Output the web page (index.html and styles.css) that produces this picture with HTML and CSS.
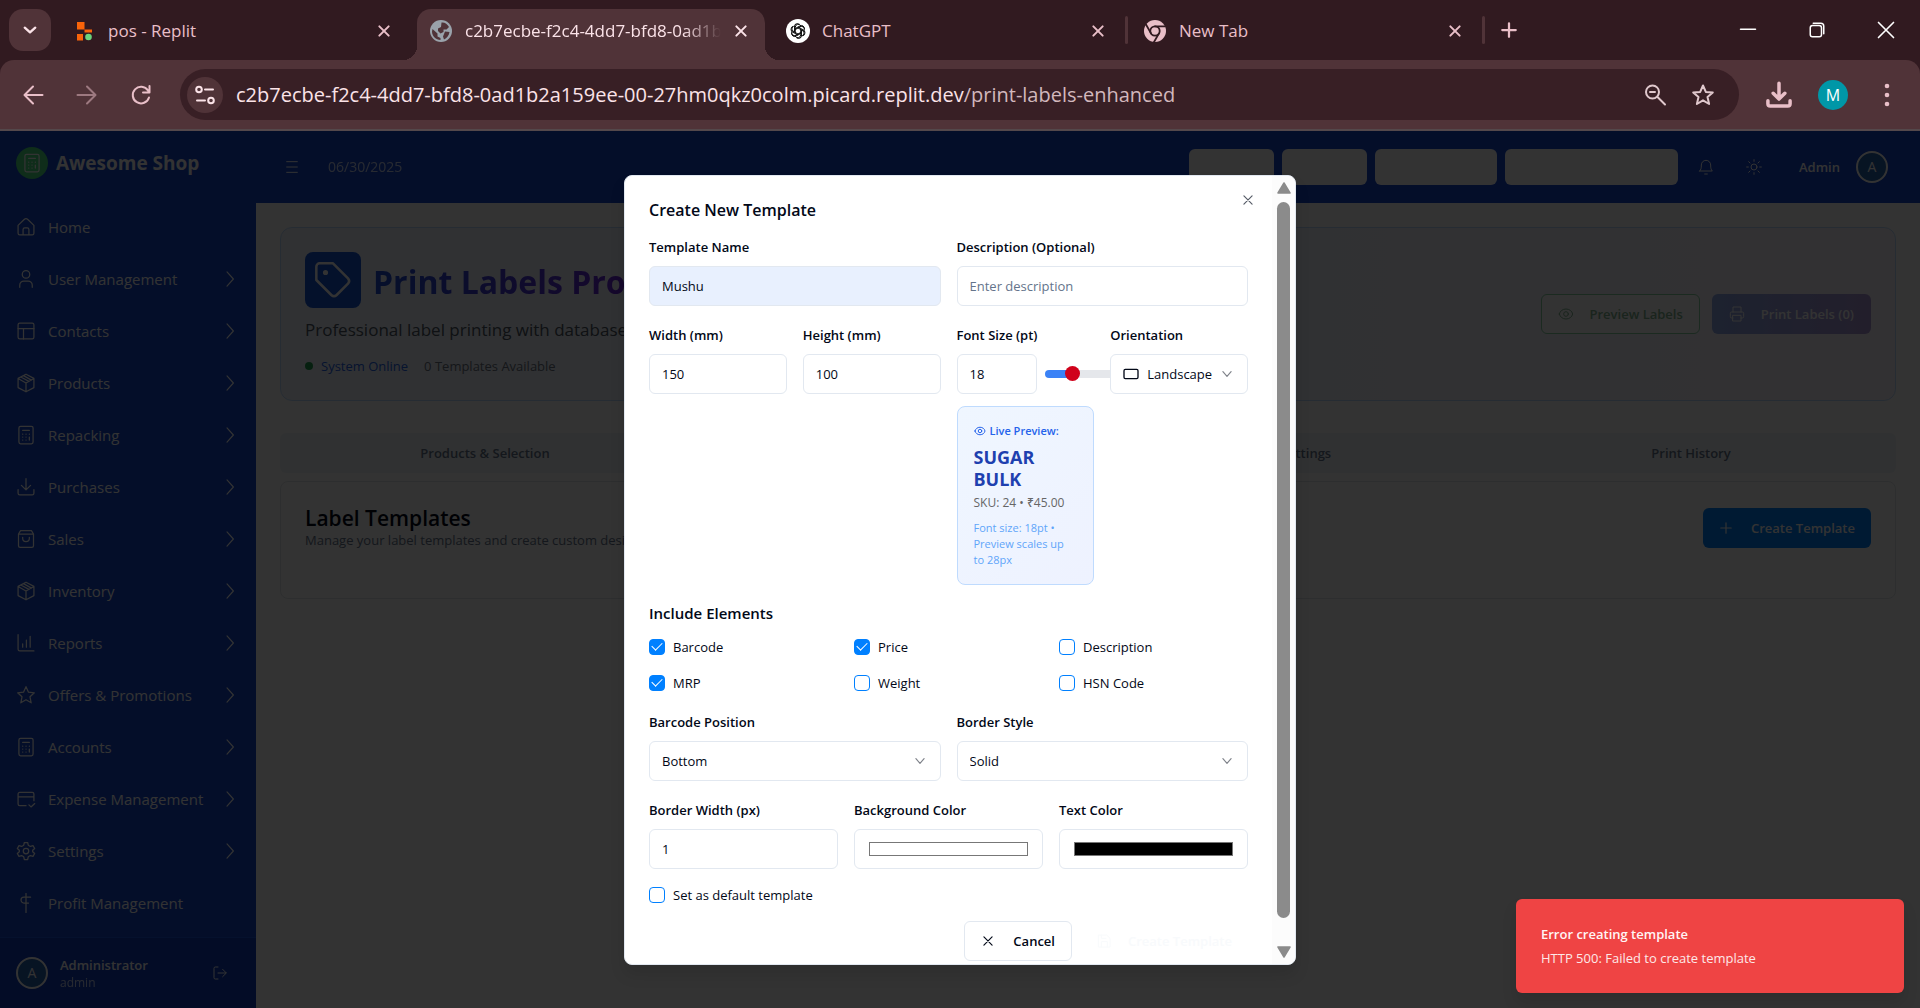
FILE: index.html
```html
<!DOCTYPE html>
<html lang="en">
<head>
<meta charset="utf-8">
<meta name="viewport" content="width=device-width, initial-scale=1">
<title>Print Labels Pro</title>
<link rel="stylesheet" href="styles.css">
</head>
<body>
<svg class="defs" aria-hidden="true">
  <symbol id="x" viewBox="0 0 24 24"><path d="M5 5l14 14M19 5L5 19"/></symbol>
  <symbol id="chev" viewBox="0 0 24 24"><path d="M8 2.500l8.500 9.500L8 21.500"/></symbol>
  <symbol id="down" viewBox="0 0 24 24"><path d="M5 8l7 8 7-8"/></symbol>
  <symbol id="home" viewBox="0 0 24 24"><path d="M2.500 10L9.800 3a3.200 3.200 0 0 1 4.400 0l7.300 7V19.500a2 2 0 0 1-2 2H4.500a2 2 0 0 1-2-2zM8.500 21.500V15a2 2 0 0 1 2-2h3a2 2 0 0 1 2 2v6.500"/></symbol>
  <symbol id="user" viewBox="0 0 24 24"><circle cx="12" cy="6.500" r="4.500"/><path d="M4.500 22v-2.500a5 5 0 0 1 5-5h5a5 5 0 0 1 5 5V22"/></symbol>
  <symbol id="layout" viewBox="0 0 24 24"><rect x="2.500" y="2.500" width="19" height="19" rx="2"/><path d="M2.500 9h19M9 9v12.500"/></symbol>
  <symbol id="box" viewBox="0 0 24 24"><path d="M12 1.500l9.500 5v11l-9.500 5-9.500-5v-11zM2.500 6.500L12 12l9.500-5.500M12 12v10.500M5.800 4.800L15.500 10M9 3.200l9.500 5.300"/></symbol>
  <symbol id="calc" viewBox="0 0 24 24"><rect x="3.500" y="1.500" width="17" height="21" rx="2"/><path d="M8 6.500h8M8 11h.1M12 11h.1M16 11h.1M8 14.500h.1M12 14.500h.1M8 18h.1M12 18h.1M16 14.500V18"/></symbol>
  <symbol id="tray" viewBox="0 0 24 24"><path d="M12 2v13M6.500 10l5.500 5.500 5.500-5.500M2.500 15v4.500a2 2 0 0 0 2 2h15a2 2 0 0 0 2-2V15"/></symbol>
  <symbol id="bag" viewBox="0 0 24 24"><path d="M3 6l2.500-4h13L21 6v14a2 2 0 0 1-2 2H5a2 2 0 0 1-2-2zM3 6h18M8 10v1a4 4 0 0 0 8 0v-1"/></symbol>
  <symbol id="chart" viewBox="0 0 24 24"><path d="M2.500 2v17.500a2 2 0 0 0 2 2h17M8 17v-4M12.500 17V8.500M17 17V4"/></symbol>
  <symbol id="star" viewBox="0 0 24 24"><path d="M12 2l3 6.600 7 .8-5.200 4.800 1.400 7.200-6.200-3.600-6.200 3.600 1.400-7.200L2 9.400l7-.8z"/></symbol>
  <symbol id="card" viewBox="0 0 24 24"><path d="M12 20H4.500a2 2 0 0 1-2-2V6a2 2 0 0 1 2-2h15a2 2 0 0 1 2 2v8M2.500 9.500h19M15.500 19l2.500 2.500 4.500-4"/></symbol>
  <symbol id="gear" viewBox="0 0 24 24"><circle cx="12" cy="12" r="3.300"/><path d="M10 1.800h4l.7 3.200 2.600 1.500 3.100-1 2 3.500-2.400 2.200v1.600l2.400 2.200-2 3.500-3.100-1-2.600 1.500-.7 3.200h-4l-.7-3.200-2.600-1.500-3.100 1-2-3.500L4 12.800v-1.600L1.600 9l2-3.500 3.100 1L9.300 5z"/></symbol>
  <symbol id="profit" viewBox="0 0 24 24"><path d="M12 .5v23M17.500 5H9.500a3.500 3.500 0 0 0 0 7H15"/></symbol>
  <symbol id="exit" viewBox="0 0 24 24"><path d="M9 21H5a2 2 0 0 1-2-2V5a2 2 0 0 1 2-2h4M9 12h12M16 6.500l5.500 5.500-5.500 5.500"/></symbol>
  <symbol id="eye" viewBox="0 0 24 24"><path d="M2 12c1-4.500 5-7.500 10-7.500s9 3 10 7.500c-1 4.500-5 7.500-10 7.500S3 16.500 2 12z"/><circle cx="12" cy="12" r="3.500"/></symbol>
  <symbol id="printer" viewBox="0 0 24 24"><path d="M6 9V1.500h12V9M6 18H4a2 2 0 0 1-2-2v-5a2 2 0 0 1 2-2h16a2 2 0 0 1 2 2v5a2 2 0 0 1-2 2h-2M6 14h12v8.500H6z"/></symbol>
  <symbol id="save" viewBox="0 0 24 24"><path d="M4 3h12l5 5v13H4zM8 3v5h7M8 21v-8h9v8"/></symbol>
  <symbol id="bell" viewBox="0 0 24 24"><path d="M2.500 18h19c-2-2-2.500-4-2.500-9a7 7 0 0 0-14 0c0 5-.5 7-2.500 9zM10 22.500h4"/></symbol>
  <symbol id="sun" viewBox="0 0 24 24"><circle cx="12" cy="12" r="4.500"/><path d="M12 1v2.500M12 20.500V23M1 12h2.500M20.500 12H23M4 4l2 2M18 18l2 2M4 20l2-2M18 6l2-2"/></symbol>
  <symbol id="plus" viewBox="0 0 24 24"><path d="M12 3v18M3 12h18"/></symbol>
  <symbol id="tag" viewBox="0 0 24 24"><path d="M2 4a2 2 0 0 1 2-2h8l9 9a2.400 2.400 0 0 1 0 3.200L14.200 21a2.400 2.400 0 0 1-3.200 0L2 12z"/><circle cx="7.500" cy="7.500" r=".8" fill="currentColor"/></symbol>
</svg>

<header class="browser">
  <div class="tabstrip">
    <button class="tab-search" aria-label="Search tabs"><svg class="i14 bold" viewBox="0 0 24 24"><path d="M3 8l9 8 9-8"/></svg></button>
    <div class="tab">
      <svg class="fav" viewBox="0 0 24 24"><path fill="#f9640a" d="M5 3h7.500v7.500H5zM12.500 10.500H20v3h-7.500zM5 15h6v6.500H5z"/><circle cx="16.500" cy="18" r="3.300" fill="#6bd57c"/></svg>
      <span class="tab-title">pos - Replit</span>
      <button class="tab-close" aria-label="Close tab"><svg class="i16"><use href="#x"/></svg></button>
    </div>
    <div class="tab active">
      <svg class="fav" viewBox="0 0 24 24"><circle cx="12" cy="12" r="11" fill="#9aa3ab"/><path fill="#503338" d="M12.500 3.500c3-.5 6 1.500 7.500 4.500l-2.500 2.500h-3V13l-3 1.500L9 12V9.500L12 8zM3.500 10l5 4.500v3l3 1.500v2c-4.500 0-8.500-4-8.500-8.500zM16 12.500l4.500.5c-.5 3.500-2.500 6-5.500 7.500l-1-3z"/></svg>
      <span class="tab-title fade">c2b7ecbe-f2c4-4dd7-bfd8-0ad1b2a</span>
      <button class="tab-close" aria-label="Close tab"><svg class="i16"><use href="#x"/></svg></button>
    </div>
    <div class="tab">
      <svg class="fav" viewBox="0 0 24 24"><circle cx="12" cy="12" r="12" fill="#fff"/><g fill="none" stroke="#111" stroke-width="1"><path id="petal" d="M9.300 13.700V8.200a3 3 0 0 1 5.500-1.600M9.300 9.500l4.800-2.700a3 3 0 0 1 4.400 2.700"/><use href="#petal" transform="rotate(60 12 12)"/><use href="#petal" transform="rotate(120 12 12)"/><use href="#petal" transform="rotate(180 12 12)"/><use href="#petal" transform="rotate(240 12 12)"/><use href="#petal" transform="rotate(300 12 12)"/></g></svg>
      <span class="tab-title">ChatGPT</span>
      <button class="tab-close" aria-label="Close tab"><svg class="i16"><use href="#x"/></svg></button>
    </div>
    <span class="tab-divider"></span>
    <div class="tab">
      <svg class="fav" viewBox="0 0 24 24"><circle cx="12" cy="12" r="11" fill="#e9bfc8"/><circle cx="12" cy="12" r="4.700" fill="none" stroke="#311a20" stroke-width="1.800"/><path fill="none" stroke="#311a20" stroke-width="1.800" d="M12 7.300h10M8 14.400L3 5.500M16 14.400L11 23"/></svg>
      <span class="tab-title">New Tab</span>
      <button class="tab-close" aria-label="Close tab"><svg class="i16"><use href="#x"/></svg></button>
    </div>
    <span class="tab-divider"></span>
    <button class="new-tab" aria-label="New tab"><svg class="i18"><use href="#plus"/></svg></button>
    <div class="win">
      <button aria-label="Minimize"><svg class="i18" viewBox="0 0 24 24"><path d="M2 11h20"/></svg></button>
      <button aria-label="Restore"><svg class="i18" viewBox="0 0 24 24"><rect x="3" y="6" width="15" height="15" rx="3"/><path d="M7 3h10a4 4 0 0 1 4 4v10"/></svg></button>
      <button aria-label="Close window"><svg class="i20" viewBox="0 0 24 24"><path d="M3 3l18 18M21 3L3 21"/></svg></button>
    </div>
  </div>
  <div class="toolbar">
    <button aria-label="Back"><svg class="i24" viewBox="0 0 24 24"><path d="M21.500 12H4M12 3.500L3.500 12l8.500 8.500"/></svg></button>
    <button class="dim" aria-label="Forward"><svg class="i24" viewBox="0 0 24 24"><path d="M2.500 12H20M12 3.500l8.500 8.500-8.500 8.500"/></svg></button>
    <button aria-label="Reload"><svg class="i24" viewBox="0 0 24 24"><path d="M20 14.500A8.300 8.300 0 1 1 19 7.500M20.500 3v6.500H14"/></svg></button>
    <div class="omnibox">
      <button class="site" aria-label="Site information"><svg class="i24" viewBox="0 0 24 24"><circle cx="6" cy="6.500" r="2.800"/><path d="M12 6.500h8M4 17.500h8"/><circle cx="18" cy="17.500" r="2.800"/></svg></button>
      <p class="url">c2b7ecbe-f2c4-4dd7-bfd8-0ad1b2a159ee-00-27hm0qkz0colm.picard.replit.dev<span>/print-labels-enhanced</span></p>
      <button aria-label="Zoom"><svg class="i24" viewBox="0 0 24 24"><circle cx="9.500" cy="9" r="6.500"/><path d="M7 9h5M14.500 14l7.500 7.500"/></svg></button>
      <button aria-label="Bookmark"><svg class="i24" viewBox="0 0 24 24"><path d="M12 2.500l2.800 6.400 7 .6-5.300 4.600 1.600 6.900-6.100-3.700L5.900 21l1.600-6.900-5.300-4.600 7-.6z"/></svg></button>
    </div>
    <button aria-label="Downloads"><svg class="i28 heavy" viewBox="0 0 24 24"><path d="M12 2v13M7 10.500l5 5 5-5M2.500 17v2.500a2 2 0 0 0 2 2h15a2 2 0 0 0 2-2V17"/></svg></button>
    <button class="profile" aria-label="Profile">M</button>
    <button aria-label="Menu"><svg class="i24 dots" viewBox="0 0 24 24"><circle cx="12" cy="3" r="2.300"/><circle cx="12" cy="12" r="2.300"/><circle cx="12" cy="21" r="2.300"/></svg></button>
  </div>
</header>

<div class="app">
  <aside class="sidebar">
    <div class="brand"><span class="brand-mark"><svg class="i20"><use href="#calc"/></svg></span><strong>Awesome Shop</strong></div>
    <nav>
      <a href="#"><svg class="i20"><use href="#home"/></svg><span>Home</span></a>
      <a href="#"><svg class="i20"><use href="#user"/></svg><span>User Management</span><svg class="i18"><use href="#chev"/></svg></a>
      <a href="#"><svg class="i20"><use href="#layout"/></svg><span>Contacts</span><svg class="i18"><use href="#chev"/></svg></a>
      <a href="#"><svg class="i20"><use href="#box"/></svg><span>Products</span><svg class="i18"><use href="#chev"/></svg></a>
      <a href="#"><svg class="i20"><use href="#calc"/></svg><span>Repacking</span><svg class="i18"><use href="#chev"/></svg></a>
      <a href="#"><svg class="i20"><use href="#tray"/></svg><span>Purchases</span><svg class="i18"><use href="#chev"/></svg></a>
      <a href="#"><svg class="i20"><use href="#bag"/></svg><span>Sales</span><svg class="i18"><use href="#chev"/></svg></a>
      <a href="#"><svg class="i20"><use href="#box"/></svg><span>Inventory</span><svg class="i18"><use href="#chev"/></svg></a>
      <a href="#"><svg class="i20"><use href="#chart"/></svg><span>Reports</span><svg class="i18"><use href="#chev"/></svg></a>
      <a href="#"><svg class="i20"><use href="#star"/></svg><span>Offers &amp; Promotions</span><svg class="i18"><use href="#chev"/></svg></a>
      <a href="#"><svg class="i20"><use href="#calc"/></svg><span>Accounts</span><svg class="i18"><use href="#chev"/></svg></a>
      <a href="#"><svg class="i20"><use href="#card"/></svg><span>Expense Management</span><svg class="i18"><use href="#chev"/></svg></a>
      <a href="#"><svg class="i20"><use href="#gear"/></svg><span>Settings</span><svg class="i18"><use href="#chev"/></svg></a>
      <a href="#"><svg class="i20"><use href="#profit"/></svg><span>Profit Management</span></a>
    </nav>
    <div class="account">
      <span class="avatar">A</span>
      <div class="who"><strong>Administrator</strong><span>admin</span></div>
      <button aria-label="Log out"><svg class="i16"><use href="#exit"/></svg></button>
    </div>
  </aside>

  <div class="content">
    <div class="topbar">
      <button aria-label="Toggle menu"><svg class="i16" viewBox="0 0 24 24"><path d="M4 4h16M4 12h16M4 20h16"/></svg></button>
      <span class="date">06/30/2025</span>
      <div class="quick">
        <span class="chip c1"></span><span class="chip c1"></span><span class="chip c2"></span><span class="chip c3"></span>
      </div>
      <button aria-label="Notifications"><svg class="i16"><use href="#bell"/></svg></button>
      <button aria-label="Theme"><svg class="i16"><use href="#sun"/></svg></button>
      <strong class="role">Admin</strong>
      <span class="avatar">A</span>
    </div>

    <main>
      <section class="hero">
        <div class="hero-text">
          <div class="hero-title"><span class="hero-mark"><svg class="i40"><use href="#tag"/></svg></span><h1>Print Labels Pro</h1></div>
          <p class="lead">Professional label printing with database</p>
          <p class="status"><i></i><span class="online">System Online</span><span>0 Templates Available</span></p>
        </div>
        <div class="hero-actions">
          <button class="btn preview"><svg class="i16"><use href="#eye"/></svg>Preview Labels</button>
          <button class="btn print"><svg class="i16"><use href="#printer"/></svg>Print Labels (0)</button>
        </div>
      </section>
      <div class="tabs" role="tablist">
        <button role="tab">Products &amp; Selection</button>
        <button role="tab">Templates</button>
        <button role="tab">Print Settings</button>
        <button role="tab">Print History</button>
      </div>
      <section class="templates">
        <div class="templates-head">
          <div><h2>Label Templates</h2><p>Manage your label templates and create custom designs</p></div>
          <button class="btn primary"><svg class="i14"><use href="#plus"/></svg>Create Template</button>
        </div>
      </section>
    </main>
  </div>

  <div class="overlay">
    <div class="dialog" role="dialog" aria-labelledby="dlg-title">
      <button type="button" class="dialog-close" aria-label="Close"><svg class="i14"><use href="#x"/></svg></button>
      <form class="form">
        <h2 class="dialog-title" id="dlg-title">Create New Template</h2>
        <div class="row two">
          <div class="field"><label for="name">Template Name</label><input class="filled" id="name" type="text" value="Mushu"></div>
          <div class="field"><label for="desc">Description (Optional)</label><input id="desc" type="text" placeholder="Enter description"></div>
        </div>
        <div class="row four">
          <div class="field"><label for="w">Width (mm)</label><input id="w" type="text" value="150"></div>
          <div class="field"><label for="h">Height (mm)</label><input id="h" type="text" value="100"></div>
          <div class="field">
            <label for="fs">Font Size (pt)</label>
            <div class="size"><input id="fs" type="text" value="18"><input type="range" aria-label="Font size" min="6" max="72" value="18"></div>
            <div class="live">
              <p class="live-head"><svg class="i12"><use href="#eye"/></svg>Live Preview:</p>
              <p class="live-name">SUGAR BULK</p>
              <p class="live-sku">SKU: 24 • ₹45.00</p>
              <p class="live-note">Font size: 18pt • Preview scales up to 28px</p>
            </div>
          </div>
          <div class="field">
            <label for="orient">Orientation</label>
            <div class="select with-icon">
              <svg class="i16 lead-icon" viewBox="0 0 24 24"><rect x="1.500" y="5" width="21" height="14" rx="2"/></svg>
              <select id="orient"><option>Landscape</option><option>Portrait</option></select>
              <svg class="i14 caret"><use href="#down"/></svg>
            </div>
          </div>
        </div>
        <fieldset>
          <legend>Include Elements</legend>
          <div class="row checks">
            <label><input type="checkbox" checked>Barcode</label>
            <label><input type="checkbox" checked>Price</label>
            <label><input type="checkbox">Description</label>
            <label><input type="checkbox" checked>MRP</label>
            <label><input type="checkbox">Weight</label>
            <label><input type="checkbox">HSN Code</label>
          </div>
        </fieldset>
        <div class="row two">
          <div class="field"><label for="pos">Barcode Position</label><div class="select"><select id="pos"><option>Bottom</option></select><svg class="i14 caret"><use href="#down"/></svg></div></div>
          <div class="field"><label for="bs">Border Style</label><div class="select"><select id="bs"><option>Solid</option></select><svg class="i14 caret"><use href="#down"/></svg></div></div>
        </div>
        <div class="row three">
          <div class="field"><label for="bw">Border Width (px)</label><input id="bw" type="text" value="1"></div>
          <div class="field"><label for="bg">Background Color</label><input id="bg" type="color" value="#ffffff"></div>
          <div class="field"><label for="tc">Text Color</label><input id="tc" type="color" value="#000000"></div>
        </div>
        <label class="check"><input type="checkbox">Set as default template</label>
        <div class="form-actions">
          <button type="button" class="btn cancel"><svg class="i14"><use href="#x"/></svg>Cancel</button>
          <button type="button" class="btn ghost"><svg class="i16"><use href="#save"/></svg>Create Template</button>
        </div>
      </form>
      <div class="scroll" aria-hidden="true">
        <svg viewBox="0 0 14 12"><path d="M7 1l6 10H1z"/></svg><span></span><svg viewBox="0 0 14 12"><path d="M7 11L1 1h12z"/></svg>
      </div>
    </div>
  </div>

  <div class="toast" role="alert"><strong>Error creating template</strong><span>HTTP 500: Failed to create template</span></div>
</div>
</body>
</html>
```

FILE: styles.css
```css
* { box-sizing: border-box; }
body {
  margin: 0;
  min-height: 100vh;
  display: flex;
  flex-direction: column;
  font: 13px/20px "Open Sans", "Noto Sans", sans-serif;
  background: #333;
}
h1, h2, p, fieldset { margin: 0; padding: 0; border: 0; }
button { padding: 0; border: 0; background: none; color: inherit; font: inherit; display: grid; place-items: center; }
a { color: inherit; text-decoration: none; }
strong { font-weight: 600; }
svg { display: block; flex: none; fill: none; stroke: currentColor; stroke-width: 1.5; stroke-linecap: round; stroke-linejoin: round; }
.defs { position: absolute; width: 0; height: 0; }
.i12 { width: 12px; height: 12px; stroke-width: 2; }
.i14 { width: 14px; height: 14px; stroke-width: 2; }
.i16 { width: 16px; height: 16px; }
.i18 { width: 18px; height: 18px; }
.i20 { width: 20px; height: 20px; }
.i24 { width: 24px; height: 24px; }
.i28 { width: 28px; height: 28px; }
.i40 { width: 40px; height: 40px; }
.bold { stroke-width: 4; }

/* Browser frame */
.browser { color: #e9bfc8; background: #311a20; }
.tabstrip { display: flex; align-items: center; height: 60px; padding-left: 9px; font-size: 17px; line-height: 28px; }
.tab-search { width: 42px; height: 42px; margin-right: 9px; border-radius: 14px; background: #503338; color: #fbe3e8; }
.tab { position: relative; display: flex; align-items: center; gap: 12px; flex: 0 1 348px; min-width: 0; height: 51px; margin-top: 9px; padding: 0 16px 7px 12px; }
.tab + .tab { margin-left: 9px; }
.tab.active { background: #503338; border-radius: 14px 14px 0 0; color: #fbe3e8; }
.tab.active::before, .tab.active::after { content: ""; position: absolute; bottom: 0; width: 14px; height: 14px; }
.tab.active::before { left: -14px; background: radial-gradient(circle at 0 0, transparent 14px, #503338 14px); }
.tab.active::after { right: -14px; background: radial-gradient(circle at 100% 0, transparent 14px, #503338 14px); }
.fav { width: 24px; height: 24px; stroke: none; }
.tab-title { flex: 1; min-width: 0; overflow: hidden; white-space: nowrap; }
.fade { -webkit-mask-image: linear-gradient(90deg, #000 85%, transparent); mask-image: linear-gradient(90deg, #000 85%, transparent); }
.tab-close svg { stroke-width: 3; }
.tab-divider { width: 3px; height: 28px; margin: 0 3px; border-radius: 2px; background: #503338; }
.new-tab { width: 42px; height: 44px; }
.new-tab svg { stroke-width: 3; }
.win { display: flex; margin-left: auto; color: #fff; }
.win button { width: 69px; height: 60px; }
.win svg { stroke-width: 2; }
.toolbar { display: flex; align-items: center; height: 71px; padding: 0 6px; background: #503338; border-radius: 14px 14px 0 0; border-bottom: 2px solid #54484b; }
.toolbar > button { width: 54px; height: 48px; }
.toolbar svg { stroke-width: 2; }
.toolbar .heavy { stroke-width: 3; }
.dim { opacity: .5; }
.omnibox { flex: 1; min-width: 0; display: flex; align-items: center; height: 51px; margin: 0 13px 0 12px; padding: 0 12px 0 7px; border-radius: 26px; background: #381f25; }
.omnibox button { width: 48px; height: 48px; color: #e0c8cd; }
.omnibox .site { width: 36px; height: 36px; margin-right: 13px; border-radius: 50%; background: #503338; color: #fbe3e8; }
.url { flex: 1; min-width: 0; overflow: hidden; white-space: nowrap; font-size: 20px; line-height: 28px; color: #fbe3e8; }
.url span { color: #d2b8bd; }
.toolbar .profile { width: 30px; height: 30px; margin: 0 12px; border-radius: 50%; background: #0097a7; color: #fff; font-size: 16px; }
.toolbar .dots { fill: currentColor; stroke: none; }

/* Application shell */
.app { position: relative; flex: 1; display: flex; background: #fff; }
.sidebar { flex: none; width: 256px; display: flex; flex-direction: column; background: #1446cd; color: #fff; }
.brand { display: flex; align-items: center; gap: 8px; padding: 16px 16px 22px; font-size: 19px; line-height: 32px; }
.brand strong { font-weight: 700; }
.brand-mark { display: grid; place-items: center; width: 32px; height: 32px; border-radius: 50%; background: #4ade80; }
nav { flex: 1; font-size: 15px; }
nav a { display: flex; align-items: center; gap: 12px; height: 52px; padding: 0 17px 0 16px; }
nav span { flex: 1; white-space: nowrap; }
.account { display: flex; align-items: center; gap: 12px; height: 71px; padding: 0 28px 0 16px; border-top: 1px solid #1d56e0; background: #103ebe; }
.who { flex: 1; display: flex; flex-direction: column; }
.who span { font-size: 12px; line-height: 16px; opacity: .75; }
.avatar { display: grid; place-items: center; width: 32px; height: 32px; border: 2px solid #fff; border-radius: 50%; background: #2763ad; color: #fff; font-size: 14px; }
.content { flex: 1; min-width: 0; }
.topbar { display: flex; align-items: center; height: 72px; padding: 0 32px 0 28px; background: #1446cd; color: #fff; }
.topbar button { width: 16px; margin-right: 32px; }
.topbar > button:first-child { margin-right: 28px; }
.date { font-size: 14px; opacity: .75; }
.quick { flex: 1; display: flex; justify-content: flex-end; gap: 8px; margin-right: 20px; }
.chip { height: 36px; border-radius: 6px; background: #fff; }
.c1 { width: 85px; }
.c2 { width: 122px; }
.c3 { width: 173px; }
.role { margin: 0 16px 0 5px; }

main { padding: 24px; }
.hero { display: flex; align-items: center; justify-content: space-between; padding: 24px; border: 1px solid #bfdbfe; border-radius: 12px; background: linear-gradient(90deg, #eff6ff, #f1f5ff 65%, #faf5ff); }
.hero-title { display: flex; align-items: center; gap: 12px; }
.hero-mark { display: grid; place-items: center; width: 56px; height: 56px; border-radius: 8px; background: #1456d8; color: #fff; }
h1 { padding-top: 4px; font-size: 32px; line-height: 44px; background: linear-gradient(90deg, #1d4ed8, #6d28d9); -webkit-background-clip: text; background-clip: text; color: transparent; }
.lead { margin-top: 8px; font-size: 17px; line-height: 28px; color: #4b5563; }
.status { display: flex; align-items: center; margin-top: 12px; color: #6b7280; }
.status i { width: 8px; height: 8px; margin-right: 8px; border-radius: 50%; background: #22a050; }
.online { margin-right: 16px; color: #2563eb; }
.hero-actions { display: flex; gap: 12px; }
.btn { display: flex; align-items: center; gap: 16px; height: 40px; padding: 0 16px; border-radius: 6px; font-weight: 600; white-space: nowrap; }
.preview { border: 1px solid #86cfa0; background: #fff; color: #80b490; }
.print { padding: 0 17px; background: linear-gradient(90deg, #8fa9ea, #ac97d6); color: #fff; }
.tabs { display: grid; grid-template-columns: repeat(4, 1fr); height: 40px; margin: 32px 0 8px; padding: 4px; border-radius: 6px; background: #f1f5f9; color: #64748b; font-weight: 600; }
.templates { min-height: 118px; padding: 24px; border: 1px solid #e2e6eb; border-radius: 8px; }
.templates-head { display: flex; justify-content: space-between; align-items: center; }
.templates h2 { font-size: 21px; line-height: 24px; font-weight: 600; color: #020817; }
.templates p { line-height: 20px; color: #64748b; }
.primary { gap: 18px; background: #0080ff; color: #fff; }

/* Dialog */
.overlay { position: absolute; inset: 0; display: grid; place-items: center; background: rgba(0, 0, 0, .8); }
.dialog { position: relative; display: flex; width: 672px; max-width: 96%; border: 1px solid #e2e8f0; border-radius: 8px; background: #fff; color: #020817; overflow: hidden; box-shadow: 0 10px 15px rgba(0, 0, 0, .1); }
.form { flex: 1; min-width: 0; padding: 24px 24px 3px; }
.dialog-title { margin-bottom: 17px; font-size: 16px; line-height: 20px; font-weight: 600; }
.dialog-close { position: absolute; top: 17px; right: 40px; color: #555b66; }
.row { display: grid; gap: 16px; }
.two { grid-template-columns: 1fr 1fr; margin-bottom: 19px; }
.three { grid-template-columns: repeat(3, 1fr); margin-bottom: 16px; }
.four { grid-template-columns: repeat(4, 1fr); margin-bottom: 16px; }
.field { min-width: 0; }
.field > label { display: block; height: 20px; margin-bottom: 9px; font-weight: 600; white-space: nowrap; }
.field input, select { display: block; width: 100%; height: 40px; padding: 0 12px; border: 1px solid #e2e8f0; border-radius: 6px; background: #fff; color: #020817; font: 13px/20px "Open Sans", "Noto Sans", sans-serif; outline: 0; }
.field .filled { background: #e8f0fe; }
input::placeholder { color: #64748b; opacity: 1; }
.size { display: flex; align-items: center; gap: 8px; }
.size input[type="text"] { flex: none; width: 80px; }
.size input[type="range"] { flex: none; width: 129px; height: 8px; margin: 0; padding: 0; border: 0; border-radius: 4px; -webkit-appearance: none; appearance: none; background: linear-gradient(90deg, #3b82f6 18%, #e5e7eb 18%); }
input[type="range"]::-webkit-slider-thumb { -webkit-appearance: none; width: 15px; height: 15px; border-radius: 50%; background: #d0021b; }
.select { position: relative; }
.select select { -webkit-appearance: none; appearance: none; }
.with-icon select { padding-left: 36px; padding-right: 20px; }
.caret, .lead-icon { position: absolute; top: 13px; pointer-events: none; }
.caret { right: 14px; opacity: .5; }
.lead-icon { left: 13px; top: 12px; stroke-width: 2; }
.field input[type="color"] { padding: 8px 12px; }
.live { margin-top: 12px; padding: 16px; border: 1px solid #bfdbfe; border-radius: 8px; background: linear-gradient(135deg, #eff6ff, #eef2ff); font-size: 11px; line-height: 16px; }
.live-head { display: flex; align-items: center; gap: 4px; margin-bottom: 7px; color: #2563eb; font-weight: 600; white-space: nowrap; }
.live-name { font-size: 18px; line-height: 22px; font-weight: 700; color: #1e40af; }
.live-sku { margin: 5px 0 9px; font-size: 12px; font-weight: 500; color: #666; white-space: nowrap; }
.live-note { padding-right: 8px; color: #60a5fa; }
legend { padding: 0; margin-bottom: 12px; font-size: 15px; line-height: 24px; font-weight: 600; }
.checks { grid-template-columns: repeat(3, 1fr); margin-bottom: 19px; }
.checks label, .check { display: flex; align-items: center; gap: 8px; }
input[type="checkbox"] { -webkit-appearance: none; appearance: none; display: grid; place-items: center; width: 16px; height: 16px; margin: 0; border: 1px solid #0080ff; border-radius: 4px; }
input[type="checkbox"]:checked { background: #0080ff; }
input[type="checkbox"]:checked::after { content: ""; width: 5px; height: 9px; margin-bottom: 3px; border: solid #fff; border-width: 0 1px 1px 0; transform: rotate(45deg); }
.form-actions { display: flex; justify-content: flex-end; gap: 8px; margin-top: 16px; }
.cancel { gap: 18px; border: 1px solid #e2e8f0; }
.ghost { color: #f8fafc; }
.scroll { flex: none; width: 23px; display: flex; flex-direction: column; align-items: center; gap: 8px; padding: 6px 0; background: #fcfcfc; }
.scroll svg { width: 14px; height: 12px; fill: #8b8b8b; stroke: #8b8b8b; }
.scroll span { flex: 1; width: 13px; margin-bottom: 20px; border-radius: 7px; background: #8b8b8b; }

.toast { position: absolute; right: 16px; bottom: 15px; display: flex; flex-direction: column; gap: 4px; width: 388px; max-width: 90%; padding: 25px; border-radius: 6px; background: #ef4444; color: #fde8e8; box-shadow: 0 10px 15px rgba(0, 0, 0, .1); }
.toast strong { color: #fff5f5; }
```
